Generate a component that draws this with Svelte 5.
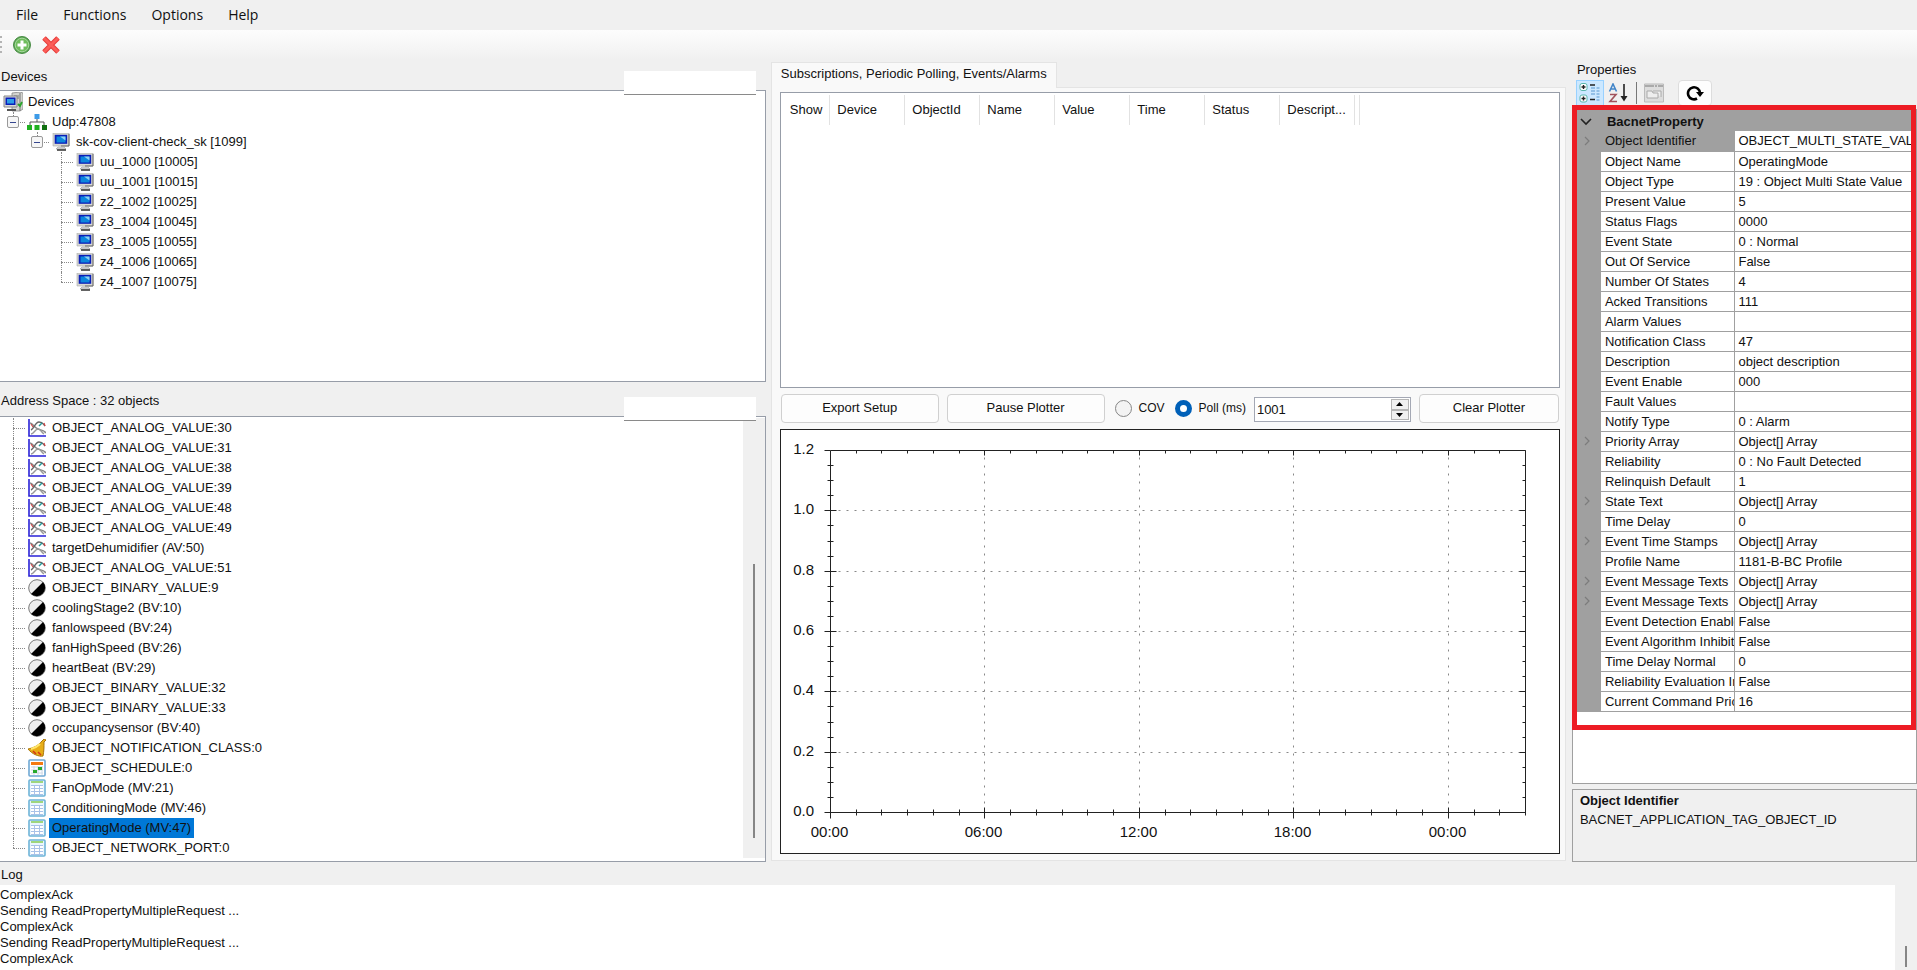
<script lang="ts">
	let mode: string = 'poll';
	let interval: number = 1001;
	let selected: string = 'OperatingMode (MV:47)';
	let plotWidth: number = 778;
	let plotHeight: number = 422;

	const menu = ['File', 'Functions', 'Options', 'Help'];
	const devices = [
		'uu_1000 [10005]',
		'uu_1001 [10015]',
		'z2_1002 [10025]',
		'z3_1004 [10045]',
		'z3_1005 [10055]',
		'z4_1006 [10065]',
		'z4_1007 [10075]'
	];
	const objects = [
		['analog', 'OBJECT_ANALOG_VALUE:30'],
		['analog', 'OBJECT_ANALOG_VALUE:31'],
		['analog', 'OBJECT_ANALOG_VALUE:38'],
		['analog', 'OBJECT_ANALOG_VALUE:39'],
		['analog', 'OBJECT_ANALOG_VALUE:48'],
		['analog', 'OBJECT_ANALOG_VALUE:49'],
		['analog', 'targetDehumidifier (AV:50)'],
		['analog', 'OBJECT_ANALOG_VALUE:51'],
		['binary', 'OBJECT_BINARY_VALUE:9'],
		['binary', 'coolingStage2 (BV:10)'],
		['binary', 'fanlowspeed (BV:24)'],
		['binary', 'fanHighSpeed (BV:26)'],
		['binary', 'heartBeat (BV:29)'],
		['binary', 'OBJECT_BINARY_VALUE:32'],
		['binary', 'OBJECT_BINARY_VALUE:33'],
		['binary', 'occupancysensor (BV:40)'],
		['bell', 'OBJECT_NOTIFICATION_CLASS:0'],
		['schedule', 'OBJECT_SCHEDULE:0'],
		['table', 'FanOpMode (MV:21)'],
		['table', 'ConditioningMode (MV:46)'],
		['table', 'OperatingMode (MV:47)'],
		['table', 'OBJECT_NETWORK_PORT:0']
	];
	const columns = ['Show', 'Device', 'ObjectId', 'Name', 'Value', 'Time', 'Status', 'Descript...'];
	// name, value, expandable
	const properties: [string, string, boolean?][] = [
		['Object Identifier', 'OBJECT_MULTI_STATE_VALUE:47', true],
		['Object Name', 'OperatingMode'],
		['Object Type', '19 : Object Multi State Value'],
		['Present Value', '5'],
		['Status Flags', '0000'],
		['Event State', '0 : Normal'],
		['Out Of Service', 'False'],
		['Number Of States', '4'],
		['Acked Transitions', '111'],
		['Alarm Values', ''],
		['Notification Class', '47'],
		['Description', 'object description'],
		['Event Enable', '000'],
		['Fault Values', ''],
		['Notify Type', '0 : Alarm'],
		['Priority Array', 'Object[] Array', true],
		['Reliability', '0 : No Fault Detected'],
		['Relinquish Default', '1'],
		['State Text', 'Object[] Array', true],
		['Time Delay', '0'],
		['Event Time Stamps', 'Object[] Array', true],
		['Profile Name', '1181-B-BC Profile'],
		['Event Message Texts', 'Object[] Array', true],
		['Event Message Texts', 'Object[] Array', true],
		['Event Detection Enable', 'False'],
		['Event Algorithm Inhibit', 'False'],
		['Time Delay Normal', '0'],
		['Reliability Evaluation Inhibit', 'False'],
		['Current Command Priority', '16']
	];
	const log = [
		'ComplexAck',
		'Sending ReadPropertyMultipleRequest ...',
		'ComplexAck',
		'Sending ReadPropertyMultipleRequest ...',
		'ComplexAck'
	];

	// plot area: 27 hours wide, 0.0 - 1.2 high
	const hours = Array.from({ length: 28 }, (_, i) => i);
	const steps = Array.from({ length: 25 }, (_, i) => i);
	$: left = 49;
	$: right = plotWidth - 34;
	$: top = 20;
	$: bottom = plotHeight - 41;
	$: px = (h: number) => Math.round(left + ((right - left) * h) / 27) + 0.5;
	$: py = (s: number) => Math.round(bottom - ((bottom - top) * s) / 24) + 0.5;
	const clock = (h: number) => String(h % 24).padStart(2, '0') + ':00';
</script>

{#snippet icon(name)}
	<svg class="icon" viewBox="0 0 18 18" width="18" height="18" aria-hidden="true">
		{#if name === 'analog'}
			<path d="M1 0v17h17" fill="none" stroke="#2a22d8" stroke-width="1.6" />
			<path d="M2 4c3 0 4 5 8 6 3 1 6 1 8 4" fill="none" stroke="#888" stroke-width="1.4" />
			<path d="M3 15c3 0 4-5 7-5s3 3 6 5" fill="none" stroke="#999" stroke-width="1.4" />
			<path d="M3 11C6 10 7 3 11 3s4 2 6 4" fill="none" stroke="#666" stroke-width="1.4" />
			<path d="M3 5l2 3M16 4l1 3" stroke="#c44" stroke-width="1.2" />
			<path d="M11 7l3-3" stroke="#299" stroke-width="1.4" />
		{:else if name === 'binary'}
			<circle cx="9" cy="9" r="8.3" fill="#eee" stroke="#777" />
			<path d="M15 3A8.5 8.5 0 0 1 3 15z" fill="#000" />
		{:else if name === 'bell'}
			<path d="M14 2l2-2 2 1-2 2c0 5 0 9-1 14-4 1-11-2-15-7C5 9 10 7 14 2z" fill="#e8ae18" stroke="#a87408" />
			<path d="M12 5C9 8 6 9 3 10" fill="none" stroke="#ffe56a" stroke-width="2" />
			<path d="M5 12l3 3M10 13l3 3" stroke="#d53a12" stroke-width="1.6" />
		{:else if name === 'schedule'}
			<rect x="1" y="1" width="16" height="16" rx="1" fill="#fff" stroke="#6fa8d4" stroke-width="1.6" />
			<path d="M3 3h12v3H3z" fill="#f47a12" />
			<path d="M3 8h12M3 11h12M3 14h12M6 7v9M10 7v9M14 7v9" stroke="#cdd8e6" />
			<path d="M10 8h4v3h-4zM5 11h4v3H5z" fill="#27a92b" />
		{:else if name === 'table'}
			<rect x="1" y="1" width="16" height="16" rx="1" fill="#e9f5fd" stroke="#6eb4d8" stroke-width="1.6" />
			<path d="M3 3h12" stroke="#8bcf5c" stroke-width="1.6" />
			<path d="M3 6h12v9H3z" fill="#fff" />
			<path d="M3 6.5h12M3 9.5h12M3 12.5h12M3 15.5h12M6.5 6v10M11.5 6v10" stroke="#a9c2e8" />
		{:else if name === 'monitor'}
			<path d="M1 0h16v13H1z" fill="#d8d8d2" stroke="#aaa" stroke-width=".6" />
			<path d="M17 1v12H9" fill="none" stroke="#666" />
			<path d="M2.7 1.8h12.5v9H2.7z" fill="#0a1fb8" />
			<path d="M4.5 3.5h9v6h-9z" fill="#0c86dc" />
			<path d="M8 3.5h5.5v4z" fill="#8cd0f4" />
			<path d="M6 14h6l2 2H4z" fill="#ddd" stroke="#999" stroke-width=".6" />
			<path d="M5 17h9" stroke="#222" stroke-width="1.4" />
		{:else if name === 'add'}
			<circle cx="9" cy="9" r="8.5" fill="#58a550" stroke="#4a8c46" />
			<circle cx="9" cy="9" r="6.8" fill="#6fbd5c" stroke="#a8d89e" />
			<path d="M9 4.5v9M4.5 9h9" stroke="#fff" stroke-width="3" />
		{:else if name === 'delete'}
			<path d="M2 2l14 14M16 2L2 16" stroke="#e63a38" stroke-width="5" />
			<path d="M2 2l14 14M16 2L2 16" stroke="#fb5d58" stroke-width="3" />
		{/if}
	</svg>
{/snippet}

<div class="app">
	<nav class="menu">
		{#each menu as item}
			<button>{item}</button>
		{/each}
	</nav>
	<div class="toolbar">
		<span class="grip"></span>
		<button aria-label="Add device">{@render icon('add')}</button>
		<button aria-label="Remove device">{@render icon('delete')}</button>
	</div>

	<main>
		<section class="left">
			<div class="caption">Devices<span class="patch"></span></div>
			<div class="box tree">
				<div class="row">
					<span class="cell">
						<svg class="icon" viewBox="0 0 20 20" width="20" height="20" aria-hidden="true">
							<path d="M9 1l8-1 3 1v16l-3 2H9z" fill="#d4d4d0" stroke="#888" stroke-width=".8" />
							<path d="M17 1v18M11 4h5M11 6h5" stroke="#777" />
							<path d="M1 4h13v11H1z" fill="#d8d8d8" stroke="#888" />
							<path d="M2.5 5.5h10v7.5h-10z" fill="#0a1fb8" />
							<path d="M4 7h7v4.5H4z" fill="#2c9de8" />
							<path d="M15 12l2 2 2-4" fill="none" stroke="#2aa52a" stroke-width="1.8" />
							<path d="M4 18h9" stroke="#555" stroke-width="2" />
						</svg>
					</span>
					<span class="label">Devices</span>
				</div>
				<div class="row">
					<span class="cell guide short"><button class="expander" aria-label="Collapse"></button></span>
					<span class="cell">
						<svg class="icon" viewBox="0 0 20 20" width="20" height="20" aria-hidden="true">
							<path d="M7.5 2h5v5h-5z" fill="#3d9be8" />
							<path d="M10 7v3M3 13v-3h14v3" fill="none" stroke="#555" />
							<path d="M0 13h5v5H0zM7.5 13h5v5h-5z" fill="#21b021" />
							<path d="M15 13h5v5h-5z" fill="#107010" />
						</svg>
					</span>
					<span class="label">Udp:47808</span>
				</div>
				<div class="row">
					<span class="cell"></span>
					<span class="cell guide short"><button class="expander" aria-label="Collapse"></button></span>
					<span class="cell">{@render icon('monitor')}</span>
					<span class="label">sk-cov-client-check_sk [1099]</span>
				</div>
				{#each devices as device, i}
					<div class="row">
						<span class="cell"></span>
						<span class="cell"></span>
						<span class="cell guide" class:last={i === devices.length - 1}></span>
						<span class="cell">{@render icon('monitor')}</span>
						<span class="label">{device}</span>
					</div>
				{/each}
			</div>
			<div class="caption">Address Space : 32 objects<span class="patch"></span></div>
			<div class="box tree scrolled">
				<div class="rows">
					{#each objects as [kind, name], i}
						<div class="row">
							<span class="cell guide" class:last={i === objects.length - 1}></span>
							<span class="cell">{@render icon(kind)}</span>
							<button class="label" class:selected={name === selected} on:click={() => (selected = name)}>
								{name}
							</button>
						</div>
					{/each}
				</div>
				<div class="scrollbar"><span class="thumb"></span></div>
			</div>
		</section>

		<section class="middle">
			<button class="tab">Subscriptions, Periodic Polling, Events/Alarms</button>
			<div class="panel">
				<div class="box list">
					<table>
						<thead>
							<tr>
								{#each columns as column}
									<th>{column}</th>
								{/each}
								<th class="end"></th>
							</tr>
						</thead>
					</table>
				</div>
				<div class="controls">
					<button class="push">Export Setup</button>
					<button class="push">Pause Plotter</button>
					<label><input type="radio" bind:group={mode} value="cov" />COV</label>
					<label><input type="radio" bind:group={mode} value="poll" />Poll (ms)</label>
					<div class="spinner">
						<input type="number" aria-label="Poll interval" bind:value={interval} />
						<div class="arrows">
							<button aria-label="Increase" on:click={() => (interval += 1)}>
								<svg viewBox="0 0 7 4" width="7" height="4"><path d="M0 4L3.5 0 7 4z" /></svg>
							</button>
							<button aria-label="Decrease" on:click={() => (interval -= 1)}>
								<svg viewBox="0 0 7 4" width="7" height="4"><path d="M0 0l3.5 4L7 0z" /></svg>
							</button>
						</div>
					</div>
					<button class="push clear">Clear Plotter</button>
				</div>
				<div class="plot" bind:clientWidth={plotWidth} bind:clientHeight={plotHeight}>
					<svg width={plotWidth} height={plotHeight}>
						{#each hours as h}
							{#if h % 6 === 0}
								{#if h > 0}
									<path class="dots" d="M{px(h)} {py(24) + 7}V{py(0)}" />
									<path d="M{px(h)} {py(24)}v5" />
								{/if}
								<path d="M{px(h)} {py(0) - 5}v11" />
								<text x={px(h) - 1} y={bottom + 25} text-anchor="middle">{clock(h)}</text>
							{:else}
								<path d="M{px(h)} {py(24)}v3M{px(h)} {py(0) - 3}v6" />
							{/if}
						{/each}
						{#each steps as s}
							{#if s % 4 === 0}
								{#if s > 0 && s < 24}
									<path class="dots" d="M{px(0) + 8} {py(s)}H{px(27)}" />
									<path d="M{px(27) - 6} {py(s)}h6M{px(0)} {py(s)}h6" />
								{/if}
								<path d="M{px(0) - 6} {py(s)}h6" />
								<text x={left - 16} y={py(s) + 3} text-anchor="end">{(s / 20).toFixed(1)}</text>
							{:else}
								<path d="M{px(0) - 3} {py(s)}h6M{px(27) - 3} {py(s)}h3" />
							{/if}
						{/each}
						<path d="M{px(0)} {py(24)}H{px(27)}V{py(0)}H{px(0)}z" />
					</svg>
				</div>
			</div>
		</section>

		<section class="right">
			<div class="heading">Properties</div>
			<div class="tools">
				<button class="on" aria-label="Categorized">
					<svg viewBox="0 0 22 20" width="22" height="20">
						<rect x="1" y=".5" width="7" height="7" rx="2" fill="#fff" stroke="#5bb8ae" />
						<rect x="1" y="12" width="7" height="7" rx="2" fill="#fff" stroke="#5bb8ae" />
						<path d="M2.500 4h4M4.500 2v4M2.500 15.500h4M4.500 13.500v4M11 2h5M11 16.500h5" stroke="#222" stroke-width="1.4" />
						<path d="M12 5h4M12 8h4M12 11h4M17.500 5h3M17.500 8h3M17.500 11h3M17.500 14h3M17.500 17h3" stroke="#7fb2e0" stroke-width="1.4" />
					</svg>
				</button>
				<button aria-label="Alphabetical">
					<svg viewBox="0 0 20 20" width="20" height="20">
						<path d="M1.5 8.5L5 1l3.5 7.5M2.500 6h5" fill="none" stroke="#4285c8" stroke-width="1.6" />
						<path d="M2 11.5h6L2 18.500h7" fill="none" stroke="#a0525c" stroke-width="1.6" />
						<path d="M16 1v14" stroke="#222" stroke-width="1.6" />
						<path d="M12.500 13h7L16 18.500z" fill="#222" />
					</svg>
				</button>
				<span class="divider"></span>
				<button aria-label="Property pages" disabled>
					<svg viewBox="0 0 20 20" width="20" height="20">
						<path d="M.5 1h19v18H.5z" fill="#ddd" stroke="#bbb" />
						<path d="M1 3h18" stroke="#aaa" stroke-width="2" stroke-dasharray="9 1 2 1" />
						<path d="M3 8h5l1 2h5v5H3zM9 8h8v6" fill="#eee" stroke="#aaa" />
					</svg>
				</button>
				<button class="refresh" aria-label="Refresh">
					<svg viewBox="0 0 18 16" width="18" height="16">
						<path d="M11 13.500A6 6 0 1 1 14 8" fill="none" stroke="#000" stroke-width="2.6" />
						<path d="M10 7h8l-4 5z" fill="#000" />
					</svg>
				</button>
			</div>
			<div class="propgrid">
				<div class="highlight">
					<div class="category">
						<svg viewBox="0 0 12 8" width="12" height="8"><path d="M1 1l5 5 5-5" fill="none" stroke="#222" stroke-width="1.6" /></svg>
						BacnetProperty
					</div>
					<table>
						<tbody>
							{#each properties as [name, value, expandable], i}
								<tr class:current={i === 0}>
									<td class="gutter">
										{#if expandable}
											<svg viewBox="0 0 6 10" width="6" height="10"><path d="M1 1l4 4-4 4" fill="none" stroke="#7c7c7c" stroke-width="1.2" /></svg>
										{/if}
									</td>
									<th scope="row">{name}</th>
									<td>{value}</td>
								</tr>
							{/each}
						</tbody>
					</table>
				</div>
			</div>
			<div class="help">
				<b>Object Identifier</b>
				<span>BACNET_APPLICATION_TAG_OBJECT_ID</span>
			</div>
		</section>
	</main>

	<footer>
		<div class="heading">Log</div>
		<div class="log">
			<div class="lines">
				{#each log as line}
					<p>{line}</p>
				{/each}
			</div>
			<div class="scrollbar"><span class="thumb"></span></div>
		</div>
	</footer>
</div>

<style>
	:global(body) {
		margin: 0;
		background: #f0f0f0;
	}
	.app {
		display: flex;
		flex-direction: column;
		min-height: 100vh;
		font-family: 'Liberation Sans', Arial, sans-serif;
		font-size: 13px;
		line-height: 20px;
		color: #111;
		background: #f0f0f0;
	}
	.app * {
		box-sizing: border-box;
	}
	button {
		padding: 0;
		border: none;
		background: none;
		font: inherit;
		color: inherit;
	}
	svg {
		display: block;
		flex: none;
	}
	.menu {
		display: flex;
		gap: 1px;
		height: 30px;
		padding-left: 4px;
		font-family: 'Open Sans', 'Noto Sans', sans-serif;
		font-size: 14px;
	}
	.menu button {
		padding: 0 12px;
	}
	.toolbar {
		display: flex;
		align-items: center;
		gap: 11px;
		height: 30px;
		background: linear-gradient(#fdfdfd, #f0f0f0);
	}
	.grip {
		width: 2px;
		height: 18px;
		background: repeating-linear-gradient(#b4b4b4 0 2px, transparent 2px 5px);
	}
	main {
		flex: 1;
		display: grid;
		grid-template-columns: 40% minmax(0, 1fr) 18%;
	}

	.left {
		display: grid;
		grid-template-rows: 30px minmax(292px, 1fr) 34px auto;
		min-width: 0;
	}
	.caption {
		position: relative;
		display: flex;
		align-items: center;
		padding: 3px 0 0 1px;
	}
	.patch {
		position: absolute;
		right: 11px;
		bottom: -5px;
		width: 132px;
		height: 24px;
		background: #fff;
		border-bottom: 1px solid #8a8a8a;
	}
	.box {
		border: 1px solid #979da8;
		background: #fff;
	}
	.tree {
		border-left: none;
		margin-right: 1px;
		padding: 1px 0 3px 1px;
	}
	.scrolled {
		display: flex;
	}
	.rows {
		flex: 1;
	}
	.row {
		display: flex;
		height: 20px;
	}
	.cell {
		position: relative;
		display: flex;
		flex: none;
		align-items: center;
		justify-content: center;
		width: 24px;
	}
	.guide::before {
		content: '';
		position: absolute;
		inset: 0 auto 0 12px;
		border-left: 1px dotted #888;
	}
	.guide.last::before,
	.guide.short::before {
		bottom: 10px;
	}
	.guide::after {
		content: '';
		position: absolute;
		inset: 10px 0 auto 12px;
		border-top: 1px dotted #888;
	}
	.expander {
		position: relative;
		z-index: 1;
		width: 12px;
		height: 12px;
		border: 1px solid #999;
		border-radius: 2px;
		background: linear-gradient(#36478f, #36478f) center / 6px 1px no-repeat, #f6f6f6;
	}
	.label {
		padding: 0 3px;
		white-space: nowrap;
	}
	.selected {
		background: #0078d7;
	}
	.scrollbar {
		display: flex;
		justify-content: center;
		width: 22px;
		background: #f0f0f0;
	}
	.thumb {
		width: 2px;
		background: #868686;
	}
	.scrolled .scrollbar {
		padding: 146px 0 20px;
	}

	.middle {
		display: flex;
		flex-direction: column;
		align-items: flex-start;
		min-width: 0;
		padding: 2px 6px 1px 4px;
	}
	.tab {
		position: relative;
		height: 26px;
		margin-bottom: -1px;
		padding: 0 9px 3px;
		border: 1px solid #e4e4e4;
		border-bottom: none;
		background: #f9f9f9;
		white-space: nowrap;
	}
	.panel {
		flex: 1;
		display: flex;
		flex-direction: column;
		width: 100%;
		padding: 4px 5px 6px 8px;
		border: 1px solid #e4e4e4;
		background: #f9f9f9;
	}
	.list {
		flex: 290 1 0;
		padding: 2px;
	}
	.list table {
		border-collapse: collapse;
	}
	.list th {
		width: 75px;
		min-width: 75px;
		height: 30px;
		padding: 0 0 0 7px;
		border-right: 1px solid #e2e2e2;
		text-align: left;
		font-weight: normal;
	}
	.list th:first-child {
		width: 47px;
		min-width: 47px;
	}
	.list th.end {
		width: 5px;
		min-width: 5px;
		padding: 0;
	}
	.controls {
		display: flex;
		align-items: center;
		gap: 8px;
		padding: 6px 1px;
	}
	.push {
		flex: 158 1 0;
		height: 29px;
		border: 1px solid #d0d0d0;
		border-radius: 4px;
		background: #fdfdfd;
	}
	.clear {
		flex-grow: 140;
	}
	.controls label {
		display: flex;
		align-items: center;
		gap: 7px;
		padding-left: 2px;
		font-size: 12px;
	}
	input[type='radio'] {
		appearance: none;
		width: 17px;
		height: 17px;
		margin: 0;
		border: 1px solid #868686;
		border-radius: 50%;
		background: #f3f3f3;
	}
	input[type='radio']:checked {
		border: 5px solid #0060b8;
		background: #fff;
	}
	.spinner {
		display: flex;
		flex: 155 1 0;
		min-width: 0;
		height: 25px;
		margin-top: 3px;
		padding: 1px;
		border: 1px solid #a4a8b4;
		background: #fff;
	}
	.spinner input {
		flex: 1;
		width: 0;
		min-width: 0;
		padding: 0 1px;
		border: none;
		outline: none;
		font: inherit;
		color: inherit;
		appearance: textfield;
	}
	.arrows {
		display: flex;
		flex-direction: column;
		width: 18px;
	}
	.arrows button {
		flex: 1;
		display: flex;
		align-items: center;
		justify-content: center;
		border: 1px solid #b5b5b5;
		background: #f0f0f0;
	}
	.plot {
		flex: 424 1 0;
		min-height: 0;
		overflow: hidden;
		border: 1px solid #222;
		background: #fff;
	}
	.plot path {
		fill: none;
		stroke: #222;
	}
	.plot .dots {
		stroke: #888;
		stroke-dasharray: 2 6;
	}
	.plot text {
		font-size: 15px;
		fill: #111;
	}

	.right {
		display: flex;
		flex-direction: column;
		min-width: 0;
	}
	.right .heading {
		padding-left: 5px;
	}
	.tools {
		display: flex;
		align-items: center;
		gap: 4px;
		height: 29px;
		padding: 0 0 4px 4px;
	}
	.tools .on {
		padding: 2px;
		border: 1px solid #99d1ff;
		background: #cce8ff;
	}
	.divider {
		width: 1px;
		height: 22px;
		margin: 0 3px 0 4px;
		background: #777;
	}
	.tools .refresh {
		margin-left: 10px;
		padding: 4px 7px;
		border: 1px solid #ddd;
		border-radius: 4px;
		background: #fdfdfd;
	}
	.propgrid {
		flex: 1;
		border: 1px solid #a0a0a0;
		background: #fff;
	}
	.highlight {
		position: relative;
		padding-bottom: 13px;
	}
	.highlight::after {
		content: '';
		position: absolute;
		inset: -5px 0 -5px -1px;
		border: 5px solid #ed1c24;
		pointer-events: none;
	}
	.category {
		display: flex;
		align-items: center;
		gap: 15px;
		height: 21px;
		padding: 2px 0 0 7px;
		background: #a0a0a0;
		font-weight: bold;
	}
	.propgrid table {
		width: 100%;
		table-layout: fixed;
		border-collapse: collapse;
	}
	.propgrid th,
	.propgrid td {
		height: 20px;
		padding: 0 0 0 3px;
		border-bottom: 1px solid #a0a0a0;
		line-height: 19px;
		text-align: left;
		font-weight: normal;
		white-space: nowrap;
		overflow: hidden;
	}
	.propgrid th {
		width: 134px;
		padding-left: 4px;
		border-right: 1px solid #a0a0a0;
	}
	.propgrid .gutter {
		width: 28px;
		padding-left: 11px;
		background: #a0a0a0;
	}
	.current th {
		background: #a0a0a0;
	}
	.help {
		display: flex;
		flex-direction: column;
		min-height: 73px;
		margin-top: 5px;
		padding: 1px 7px;
		border: 1px solid #a0a0a0;
		line-height: 19px;
	}

	footer .heading {
		height: 23px;
		padding: 3px 0 0 1px;
	}
	.log {
		display: flex;
		min-height: 85px;
		background: #fff;
	}
	.lines {
		flex: 1;
		padding-top: 2px;
	}
	.lines p {
		margin: 0;
		line-height: 16px;
	}
	.log .scrollbar {
		padding: 61px 0 3px;
	}
</style>
